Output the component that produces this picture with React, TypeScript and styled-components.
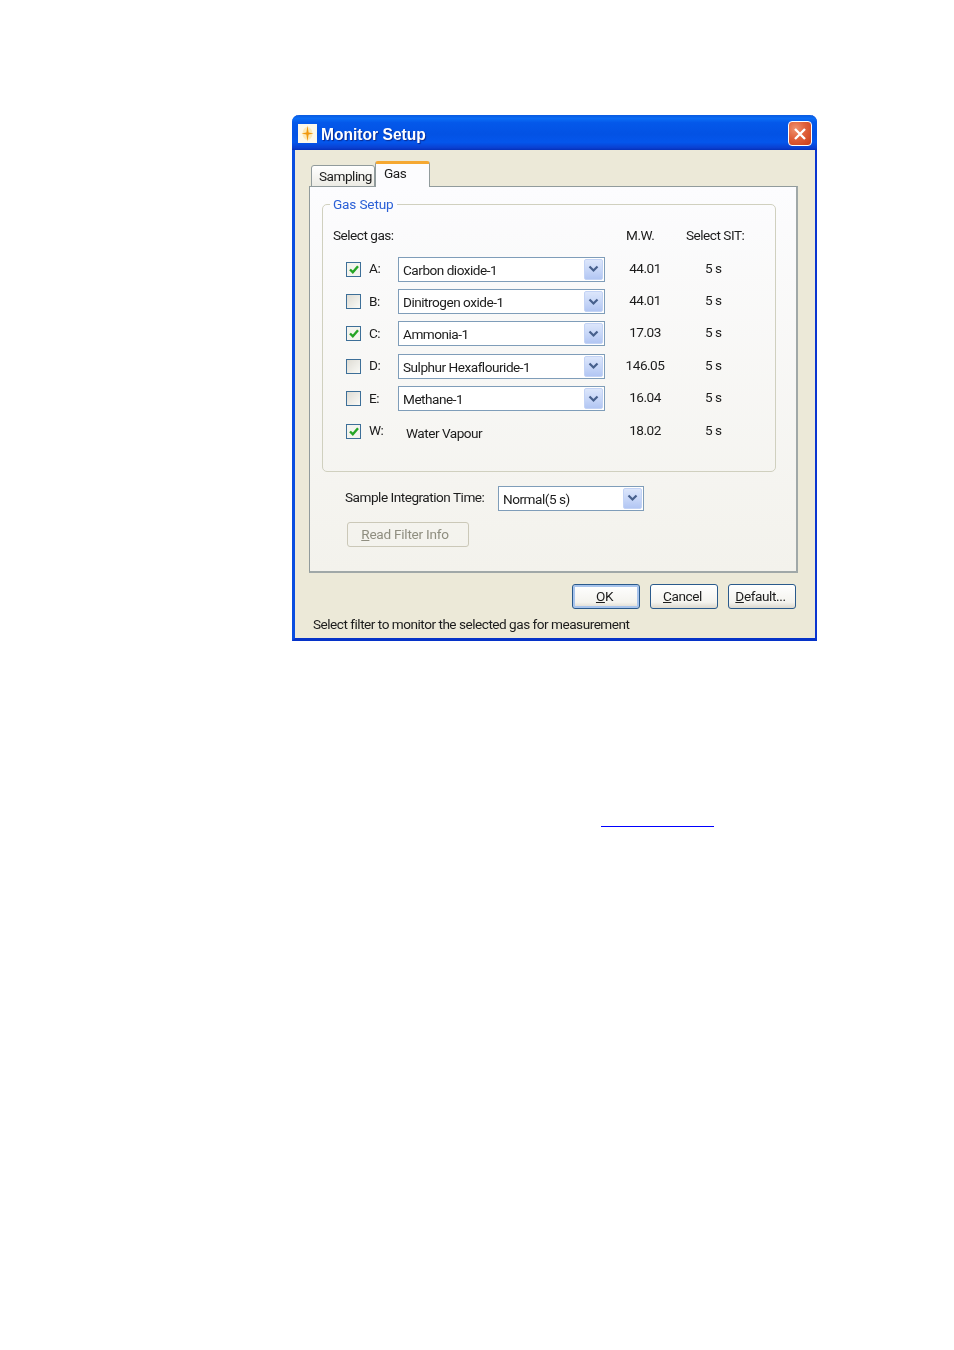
import React from "react";
import styled, { createGlobalStyle } from "styled-components";

const Global = createGlobalStyle`
  html, body { margin: 0; padding: 0; background: #fff; }
  body { font-family: Roboto, "Liberation Sans", Arial, sans-serif; color: #1c1c1c; }
`;

const Page = styled.div`
  width: 954px;
  height: 1350px;
  box-sizing: border-box;
  padding: 115px 0 0 292px;
`;

const Window = styled.div`
  width: 525px;
  height: 526px;
  box-sizing: border-box;
  border-style: solid;
  border-color: #0a4ee0 #0a35d0 #0633c8 #0a4ee0;
  border-width: 0 2px 3px 3px;
  border-radius: 7px 7px 0 0;
  background: #ece9d8;
  display: flex;
  flex-direction: column;
  filter: blur(0.35px);
  font-size: 13.6px;
  letter-spacing: -0.49px;
`;

const TitleBar = styled.div`
  height: 35px;
  box-sizing: border-box;
  margin: 0 -2px 0 -3px;
  padding: 2px 6px 0 6px;
  border-radius: 7px 7px 0 0;
  display: flex;
  align-items: center;
  gap: 4px;
  background: linear-gradient(180deg, #0a5ae0 0%, #0a6cf5 10%, #0458ea 22%, #0352e4 55%, #0456ec 78%, #0a3fd0 94%, #0530b8 100%);
`;

const AppIcon = styled.svg`
  width: 19px;
  height: 19px;
  flex: none;
  margin-bottom: 1px;
`;

const TitleText = styled.div`
  flex: 1;
  padding-top: 3px;
  font-family: "Liberation Sans", Arial, sans-serif;
  font-size: 15.6px;
  font-weight: 700;
  letter-spacing: 0;
  color: #fff;
  text-shadow: 1px 1px 1px #0a2a90;
`;

const CloseButton = styled.div`
  width: 24px;
  height: 25px;
  box-sizing: border-box;
  margin-right: -1px;
  border: 1px solid #fff;
  border-radius: 4px;
  background: radial-gradient(circle at 30% 30%, #f0936f 0%, #e0603a 45%, #c83c18 100%);
  display: flex;
  align-items: center;
  justify-content: center;
`;

const Body = styled.div`
  flex: 1;
  display: flex;
  flex-direction: column;
  padding: 12px 18px 0 14px;
`;

const TabStrip = styled.div`
  height: 25px;
  display: flex;
  align-items: flex-end;
  padding-left: 2px;
  margin-bottom: -1px;
`;

const Tab = styled.div<{ $active?: boolean }>`
  box-sizing: border-box;
  position: relative;
  z-index: ${p => (p.$active ? 1 : 0)};
  width: ${p => (p.$active ? "55px" : "64px")};
  height: ${p => (p.$active ? "26px" : "22px")};
  padding: ${p => (p.$active ? "1px 0 0 8px" : "2px 0 0 7px")};
  border: 1px solid #919b9c;
  border-bottom: ${p => (p.$active ? "none" : "1px solid #919b9c")};
  border-top: ${p => (p.$active ? "3px solid #f5a832" : "1px solid #919b9c")};
  border-radius: 3px 3px 0 0;
  background: ${p => (p.$active ? "#fcfcfe" : "linear-gradient(180deg, #fff, #ecebe4)")};
  line-height: 17px;
`;

const TabPanel = styled.div`
  box-sizing: border-box;
  width: 489px;
  height: 387px;
  padding: 7px 0 0 12px;
  border: 1px solid #919b9c;
  border-right-color: #a0a8a8;
  border-bottom-color: #a0a8a8;
  border-right-width: 2px;
  border-bottom-width: 2px;
  background: linear-gradient(180deg, #fcfcfe 0%, #f3f2ec 100%);
`;

const GasGroup = styled.fieldset`
  box-sizing: border-box;
  width: 454px;
  height: 278px;
  margin: 0;
  padding: 12px 0 0 0;
  border: 1px solid #d0d0bf;
  border-radius: 5px;
`;

const GroupTitle = styled.legend`
  margin-left: 7px;
  padding: 1px 3px 1px;
  color: #2a5fd6;
  line-height: 18px;
  letter-spacing: -0.15px;
`;

const HeaderRow = styled.div`
  display: grid;
  grid-template-columns: 293px 60px 1fr;
  padding-left: 10px;
  line-height: 18px;
  margin-bottom: 9px;
`;

const GasRow = styled.div`
  display: grid;
  grid-template-columns: 15px 37px 207px 80px 1fr;
  align-items: center;
  height: 32.4px;
  padding-left: 23px;
`;

const CheckBox = styled.span<{ $on?: boolean }>`
  box-sizing: border-box;
  width: 15px;
  height: 15px;
  border: 1px solid #3d6f98;
  background: ${p => (p.$on ? "#f4f4ee" : "linear-gradient(135deg, #dedcd4, #fafaf6)")};
  display: flex;
  align-items: center;
  justify-content: center;
`;

const RowLabel = styled.span`
  padding-left: 8px;
  margin-bottom: 2px;
`;

const ComboBox = styled.div<{ $width: number }>`
  box-sizing: border-box;
  width: ${p => p.$width}px;
  height: 25px;
  padding: 1px 1px 1px 4px;
  border: 1px solid #7f9db9;
  background: #fff;
  display: flex;
  align-items: center;
  justify-content: space-between;
  white-space: nowrap;
`;

const ComboText = styled.span`
  padding-top: 1px;
`;

const ComboArrow = styled.span`
  width: 19px;
  height: 21px;
  flex: none;
  border-radius: 2px;
  border: 1px solid #c3d3f5;
  box-sizing: border-box;
  background: linear-gradient(180deg, #dce6fb 0%, #c4d4f7 60%, #b2c6f3 100%);
  display: flex;
  align-items: center;
  justify-content: center;
`;

const PlainValue = styled.span`
  padding: 4px 0 0 8px;
`;

const Weight = styled.span`
  text-align: center;
  margin-bottom: 3px;
`;

const Sit = styled.span`
  padding-left: 20px;
  margin-bottom: 3px;
`;

const TimeRow = styled.div`
  display: flex;
  align-items: center;
  height: 24px;
  margin-top: 14px;
  padding-left: 23px;
`;

const TimeLabel = styled.span`
  width: 153px;
  margin-bottom: 2px;
`;

const ReadRow = styled.div`
  margin: 12px 0 0 25px;
`;

const PushButton = styled.div<{ $width: number; $disabled?: boolean; $default?: boolean }>`
  box-sizing: border-box;
  width: ${p => p.$width}px;
  height: 25px;
  padding: 0 ${p => (p.$disabled ? "6px" : "3px")} 1px 0;
  border-radius: 3px;
  border: 1px solid ${p => (p.$disabled ? "#cbc8b8" : "#2a5a8c")};
  background: ${p => (p.$disabled ? "transparent" : "linear-gradient(180deg, #fff 0%, #f4f3ee 75%, #dcd8ce 100%)")};
  box-shadow: ${p => (p.$default ? "inset 0 0 0 2px #a8c4ec" : "none")};
  color: ${p => (p.$disabled ? "#8f8e80" : "#1c1c1c")};
  letter-spacing: ${p => (p.$disabled ? "-0.25px" : "-0.4px")};
  display: flex;
  align-items: center;
  justify-content: center;
`;

const ButtonRow = styled.div`
  display: flex;
  justify-content: flex-end;
  gap: 10px;
  width: 487px;
  margin-top: 11px;
`;

const Status = styled.div`
  margin: 6px 0 0 4px;
  line-height: 18px;
`;

const BlankLink = styled.a`
  display: block;
  width: 113px;
  height: 1px;
  margin: 185px 0 0 309px;
  background: #0000ff;
`;

const Chevron = () => (
  <svg width="11" height="8" viewBox="0 0 11 8">
    <polyline points="1.5,1.5 5.5,5.5 9.5,1.5" fill="none" stroke="#47608c" strokeWidth="2.2" />
  </svg>
);

const Tick = () => (
  <svg width="12" height="11" viewBox="0 0 12 11">
    <polyline points="2,5.5 4.8,8.2 10,2.2" fill="none" stroke="#25a525" strokeWidth="2.4" />
  </svg>
);

const Combo = ({ width, text }: { width: number; text: string }) => (
  <ComboBox $width={width}>
    <ComboText>{text}</ComboText>
    <ComboArrow><Chevron /></ComboArrow>
  </ComboBox>
);

const gases = [
  { key: "A", on: true, name: "Carbon dioxide-1", mw: "44.01" },
  { key: "B", on: false, name: "Dinitrogen oxide-1", mw: "44.01" },
  { key: "C", on: true, name: "Ammonia-1", mw: "17.03" },
  { key: "D", on: false, name: "Sulphur Hexaflouride-1", mw: "146.05" },
  { key: "E", on: false, name: "Methane-1", mw: "16.04" },
];

export default function App() {
  return (
    <Page>
      <Global />
      <Window>
        <TitleBar>
          <AppIcon viewBox="0 0 19 19">
            <rect width="19" height="19" fill="#fdf8ea" />
            <ellipse cx="9.5" cy="9.5" rx="5" ry="6.5" fill="#fde9b8" />
            <path d="M9.5 1.5 L10.6 8.4 L15.5 9.5 L10.6 10.6 L9.5 17.5 L8.4 10.6 L3.5 9.5 L8.4 8.4 Z" fill="#f0980e" />
          </AppIcon>
          <TitleText>Monitor Setup</TitleText>
          <CloseButton>
            <svg width="14" height="14" viewBox="0 0 14 14">
              <path d="M2 2 L12 12 M12 2 L2 12" stroke="#fff" strokeWidth="2.4" fill="none" />
            </svg>
          </CloseButton>
        </TitleBar>
        <Body>
          <TabStrip>
            <Tab>Sampling</Tab>
            <Tab $active>Gas</Tab>
          </TabStrip>
          <TabPanel>
            <GasGroup>
              <GroupTitle>Gas Setup</GroupTitle>
              <HeaderRow>
                <span>Select gas:</span>
                <span>M.W.</span>
                <span>Select SIT:</span>
              </HeaderRow>
              {gases.map(g => (
                <GasRow key={g.key}>
                  <CheckBox $on={g.on}>{g.on && <Tick />}</CheckBox>
                  <RowLabel>{g.key}:</RowLabel>
                  <Combo width={207} text={g.name} />
                  <Weight>{g.mw}</Weight>
                  <Sit>5 s</Sit>
                </GasRow>
              ))}
              <GasRow>
                <CheckBox $on><Tick /></CheckBox>
                <RowLabel>W:</RowLabel>
                <PlainValue>Water Vapour</PlainValue>
                <Weight>18.02</Weight>
                <Sit>5 s</Sit>
              </GasRow>
            </GasGroup>
            <TimeRow>
              <TimeLabel>Sample Integration Time:</TimeLabel>
              <Combo width={146} text="Normal(5 s)" />
            </TimeRow>
            <ReadRow>
              <PushButton $width={122} $disabled><span><u>R</u>ead Filter Info</span></PushButton>
            </ReadRow>
          </TabPanel>
          <ButtonRow>
            <PushButton $width={68} $default><span><u>O</u>K</span></PushButton>
            <PushButton $width={68}><span><u>C</u>ancel</span></PushButton>
            <PushButton $width={68}><span><u>D</u>efault...</span></PushButton>
          </ButtonRow>
          <Status>Select filter to monitor the selected gas for measurement</Status>
        </Body>
      </Window>
      <BlankLink href="#" aria-label="link" />
    </Page>
  );
}
